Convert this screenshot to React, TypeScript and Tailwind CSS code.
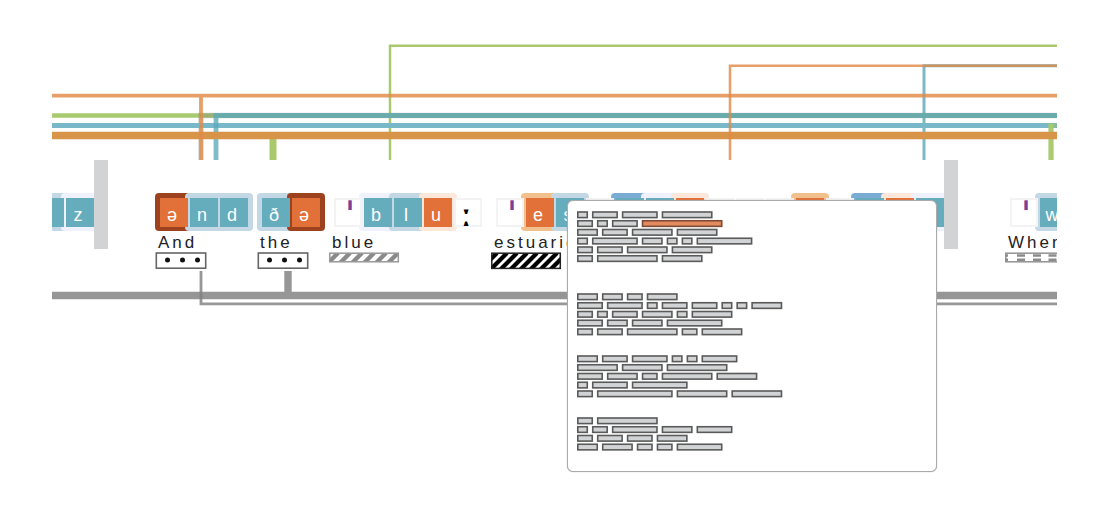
import React from "react";

type Kind = "consonant" | "vowel" | "mark" | "length" | "blank";
type Halo = "sky" | "mist" | "rust" | "peach" | "amber" | "azure" | "none";
type Sound = [symbol: string, kind: Kind, halo: Halo];
type Pattern = "dots" | "thin" | "bold" | "dashes";

const fills: Record<Kind, string> = {
  consonant: "bg-[#65acbc] text-white pt-1 pr-1 text-lg",
  vowel: "bg-[#e27139] text-white pt-1 pr-1 text-lg",
  mark: "border-2 border-[#f3f3f3] bg-white text-[#7b3f98] pt-1 pl-1 text-[36px] font-['DejaVu_Sans',sans-serif] font-bold",
  length: "border-2 border-[#f3f3f3] bg-white text-black pt-1 pr-1 text-[32px] font-bold",
  blank: "border-2 border-[#f3f3f3] bg-white",
};

const halos: Record<Halo, string> = {
  sky: "bg-[#c3d7e5]",
  mist: "bg-[#eff1fd]",
  rust: "bg-[#9c421f]",
  peach: "bg-[#fbe8da]",
  amber: "bg-[#f2c08c]",
  azure: "bg-[#7bacd3]",
  none: "hidden",
};

function Tile({ sound }: { sound: Sound }) {
  const [symbol, kind, halo] = sound;
  return (
    <div className="relative h-[30px] w-[30px] shrink-0 py-px pl-px">
      <span className={`absolute -inset-1 rounded ${halos[halo]}`} />
      <span
        className={`relative z-10 flex h-[29px] w-7 items-center justify-center leading-none ${fills[kind]}`}
      >
        {symbol}
      </span>
    </div>
  );
}

function Marker({ pattern }: { pattern: Pattern }) {
  if (pattern === "dots") {
    return (
      <svg width="52" height="18" aria-hidden="true">
        <rect x="1.3" y="1" width="49.4" height="15.2" fill="#fff" stroke="#666" strokeWidth="1.6" />
        {[12.5, 27.5, 42.5].map((x) => (
          <circle key={x} cx={x} cy="8.1" r="2.5" fill="#111" />
        ))}
      </svg>
    );
  }
  if (pattern === "dashes") {
    return (
      <svg width="100" height="18" aria-hidden="true">
        <rect x="0.8" y="1.2" width="120" height="8.6" fill="#fff" stroke="#999" strokeWidth="1.6" />
        <path
          d="M0 3.500H3M0 7.800H3M12 3.500H20M12 7.800H20M28 3.500H36M28 7.800H36M43.500 3.500H51.500M43.500 7.800H51.500M59 3.500H67M59 7.800H67"
          stroke="#8c8c8c"
          strokeWidth="2.4"
        />
      </svg>
    );
  }
  const bold = pattern === "bold";
  const h = bold ? 15 : 8;
  const step = bold ? 10 : 12;
  return (
    <svg width="71" height="18" aria-hidden="true">
      <svg x="0" y="1" width="69" height={h + 1}>
        <rect width="69" height={h + 1} fill="#fff" />
        {[-1, 0, 1, 2, 3, 4, 5, 6, 7].map((i) => (
          <path
            key={i}
            d={`M${i * step - 1} ${h + 2}L${i * step + h + 1} 0`}
            stroke={bold ? "#000" : "#8a8a8a"}
            strokeWidth={bold ? 4.2 : 4.4}
          />
        ))}
      </svg>
      <rect
        x="0.8"
        y="1.2"
        width="68.5"
        height={bold ? 15.2 : 8.6}
        fill="none"
        stroke={bold ? "#222" : "#999"}
        strokeWidth="1.5"
      />
    </svg>
  );
}

function Word({ sounds, text, pattern }: { sounds: Sound[]; text?: string; pattern?: Pattern }) {
  return (
    <div className="shrink-0 pt-[37px]">
      <div className="isolate flex px-1">
        {sounds.map((s, i) => (
          <Tile key={i} sound={s} />
        ))}
      </div>
      {text && (
        <p className="mt-[5px] h-5 pl-[3px] text-[17px] leading-[21px] tracking-[3px] whitespace-nowrap text-[#222]">
          {text}
        </p>
      )}
      {pattern && <Marker pattern={pattern} />}
    </div>
  );
}

function LineBreak() {
  return <div className="z-10 mr-[43px] -ml-[9px] h-[89px] w-3.5 shrink-0 bg-[#d1d3d4]" />;
}

function SoundThreads() {
  return (
    <svg className="block h-40 w-full" fill="none" aria-hidden="true">
      <path d="M338 160V45.700H3000" stroke="#a9c96c" strokeWidth="2.500" />
      <path d="M872 160V65.700H3000" stroke="#65acbc" strokeOpacity=".85" strokeWidth="3" />
      <path d="M0 115.500H3000" stroke="#a9cb70" strokeWidth="4.600" />
      <path d="M149 160V115.500H3000" stroke="#777" strokeOpacity=".3" strokeWidth="5.500" />
      <path d="M0 125.500H3000" stroke="#79b8c8" strokeWidth="5.200" />
      <path d="M164 160V115.500H3000" stroke="#5ba9bb" strokeOpacity=".78" strokeWidth="4.800" />
      <path d="M999 160V125.500H3000" stroke="#9fc65b" strokeOpacity=".4" strokeWidth="5" />
      <path d="M999 160V124" stroke="#a9c96c" strokeOpacity=".95" strokeWidth="5" />
      <path d="M221 160V136" stroke="#a9c96c" strokeWidth="7" />
      <path d="M0 135.500H3000" stroke="#d89449" strokeWidth="7.500" />
      <path d="M0 95.700H3000M149 160V95.700" stroke="#e08a47" strokeOpacity=".82" strokeWidth="3.800" />
      <path d="M678 160V65.700H3000" stroke="#e08a47" strokeOpacity=".82" strokeWidth="2.500" />
    </svg>
  );
}

function RhythmThreads() {
  return (
    <svg className="block h-10 w-full" fill="none" aria-hidden="true">
      <path d="M0 24.500H3000M236 24V0" stroke="#969696" strokeWidth="7.400" />
      <path d="M149 0V32.900H3000" stroke="#808080" strokeOpacity=".82" strokeWidth="2.800" />
    </svg>
  );
}

const stanzas: { top: number; lines: number[][] }[] = [
  {
    top: 0,
    lines: [[2, 5, 7, 10], [3, 2, 5, 16], [4, 5, 8, 8], [2, 9, 4, 2, 2, 11], [3, 5, 8, 8], [3, 12, 8]],
  },
  {
    top: 82,
    lines: [[4, 4, 3, 6], [5, 7, 2, 5, 5, 2, 2, 6], [3, 2, 5, 6, 2, 8], [5, 4, 6, 11], [3, 5, 10, 3, 8]],
  },
  {
    top: 144,
    lines: [[4, 5, 7, 2, 2, 7], [8, 8, 12], [5, 6, 3, 10, 8], [2, 7, 11], [3, 15, 10, 10]],
  },
  {
    top: 206,
    lines: [[3, 12], [2, 3, 9, 6, 7], [3, 5, 5, 6], [4, 6, 3, 3, 9]],
  },
];

function PoemMap() {
  return (
    <svg className="block" width="340" height="244" role="img" aria-label="Poem overview">
      {stanzas.map((stanza, s) =>
        stanza.lines.map((line, l) => {
          let x = 0;
          return line.map((n, w) => {
            const left = x;
            x += (n + 1) * 4.98;
            const current = s === 0 && l === 1 && w === 3;
            return (
              <rect
                key={`${s}-${l}-${w}`}
                x={left + 0.8}
                y={stanza.top + l * 8.75 + 1}
                width={n * 4.98 - 0.5}
                height="5.6"
                fill={current ? "#e38a5e" : "#d1d3d4"}
                stroke={current ? "#7c4a35" : "#5a5a5a"}
                strokeWidth="1.6"
              />
            );
          });
        }),
      )}
    </svg>
  );
}

export default function App() {
  return (
    <main className="min-h-screen bg-white pr-[45px] pl-[52px] font-['Liberation_Sans',Arial,sans-serif]">
      <div className="relative">
        <SoundThreads />
        <div className="overflow-hidden pb-px">
          <div className="-ml-[21px] flex items-start gap-1">
            <Word
              sounds={[
                ["", "consonant", "sky"],
                ["z", "consonant", "mist"],
              ]}
            />
            <LineBreak />
            <Word
              text="And"
              pattern="dots"
              sounds={[
                ["ə", "vowel", "rust"],
                ["n", "consonant", "sky"],
                ["d", "consonant", "sky"],
              ]}
            />
            <Word
              text="the"
              pattern="dots"
              sounds={[
                ["ð", "consonant", "sky"],
                ["ə", "vowel", "rust"],
              ]}
            />
            <Word
              text="blue"
              pattern="thin"
              sounds={[
                ["ˈ", "mark", "none"],
                ["b", "consonant", "mist"],
                ["l", "consonant", "sky"],
                ["u", "vowel", "peach"],
                ["ː", "length", "none"],
              ]}
            />
            <Word
              text="estuaries"
              pattern="bold"
              sounds={[
                ["ˈ", "mark", "none"],
                ["e", "vowel", "amber"],
                ["s", "consonant", "sky"],
                ["", "blank", "none"],
                ["", "consonant", "azure"],
                ["", "consonant", "mist"],
                ["", "vowel", "peach"],
                ["", "blank", "none"],
                ["", "blank", "none"],
                ["", "blank", "none"],
                ["", "vowel", "amber"],
                ["", "blank", "none"],
                ["", "consonant", "azure"],
                ["", "vowel", "peach"],
                ["", "consonant", "mist"],
              ]}
            />
            <LineBreak />
            <Word
              text="When"
              pattern="dashes"
              sounds={[
                ["ˈ", "mark", "none"],
                ["w", "consonant", "sky"],
              ]}
            />
          </div>
        </div>
        <RhythmThreads />
        <aside className="absolute top-[200px] left-[515px] z-20 w-[370px] rounded-md border border-[#aaa] bg-white px-[9px] pt-2.5 pb-4 shadow-[0_0_1px_#999]">
          <PoemMap />
        </aside>
      </div>
    </main>
  );
}
